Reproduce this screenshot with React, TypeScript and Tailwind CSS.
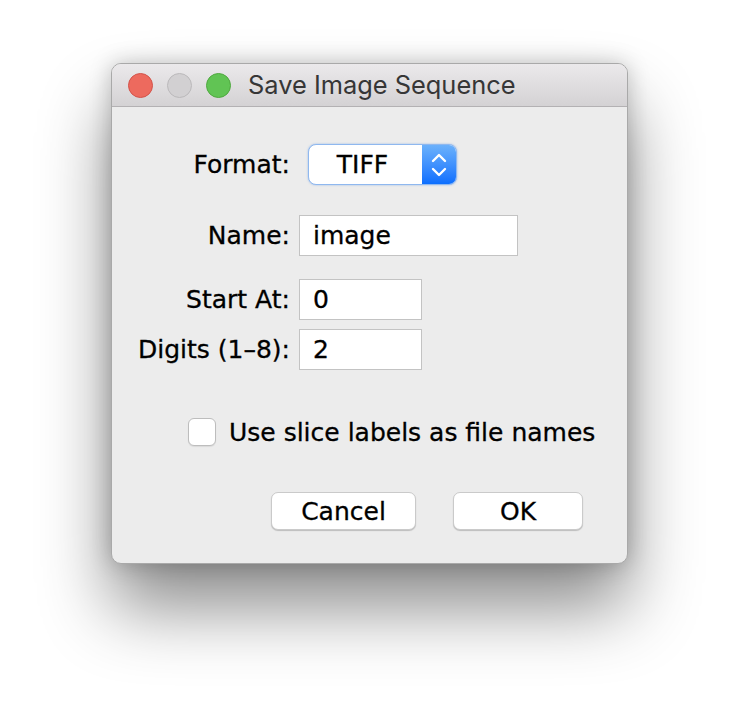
import React from "react";

const label = "text-right text-[25px] leading-none text-black [-webkit-text-stroke:0.3px_black]";
const field =
  "h-[41px] bg-white border border-[#c3c3c3] pl-[13px] flex items-center text-[25px] text-black [-webkit-text-stroke:0.3px_black]";

function Row({ name, children, className }: { name: string; children: React.ReactNode; className?: string }) {
  return (
    <div className={"flex items-center " + (className ?? "")}>
      <div className={"w-[178px] " + label}>{name}</div>
      <div className="ml-[9px]">{children}</div>
    </div>
  );
}

export default function App() {
  return (
    <div
      className="w-[740px] h-[724px] bg-white pt-[63px] pl-[111px]"
      style={{ fontFamily: '"DejaVu Sans", sans-serif' }}
    >
      <div className="w-[517px] h-[501px] rounded-[10px] border border-[#a9a9a9] bg-[#ececec] overflow-hidden shadow-[0_44px_70px_rgba(0,0,0,0.45),0_0_22px_rgba(0,0,0,0.22)]">
        {/* title bar */}
        <div className="h-[43px] flex items-center bg-gradient-to-b from-[#ebe9eb] to-[#d4d2d4] border-b border-[#b3b1b3]">
          <div className="flex items-center gap-[14px] pl-[16px]">
            <span className="w-[25px] h-[25px] rounded-full bg-[#ed6a5e] border border-[#d2534a]" />
            <span className="w-[25px] h-[25px] rounded-full bg-[#d2d0d2] border border-[#bab8ba]" />
            <span className="w-[25px] h-[25px] rounded-full bg-[#61c454] border border-[#4fa83f]" />
          </div>
          <div
            className="ml-[17px] text-[25.4px] text-[#363636] leading-none"
            style={{ fontFamily: "Inter, sans-serif" }}
          >
            Save Image Sequence
          </div>
        </div>

        {/* body */}
        <div className="pt-[37px]">
          <Row name="Format:">
            <div className="ml-[9px] w-[149px] h-[41px] flex rounded-[8px] border border-[#8fb8ef] bg-white overflow-hidden shadow-[0_0_2px_rgba(60,130,230,0.5)]">
              <div className="flex-1 flex items-center justify-center pr-[6px] text-[25px] text-black [-webkit-text-stroke:0.3px_black]">TIFF</div>
              <div className="w-[34px] bg-gradient-to-b from-[#6bb1fb] to-[#0a6efe] flex items-center justify-center">
                <svg width="16" height="28" viewBox="0 0 16 28" fill="none" stroke="white" strokeWidth="2.4" strokeLinecap="round" strokeLinejoin="round">
                  <path d="M2 10 L8 4 L14 10" />
                  <path d="M2 18 L8 24 L14 18" />
                </svg>
              </div>
            </div>
          </Row>

          <Row name="Name:" className="mt-[30px]">
            <div className={field + " w-[219px]"}>image</div>
          </Row>

          <Row name="Start At:" className="mt-[23px]">
            <div className={field + " w-[123px]"}>0</div>
          </Row>

          <Row name="Digits (1–8):" className="mt-[9px]">
            <div className={field + " w-[123px]"}>2</div>
          </Row>

          <div className="mt-[48px] pl-[76px] flex items-center">
            <span className="w-[28px] h-[28px] rounded-[6px] bg-white border border-[#bdbdbd] shadow-[0_1px_1px_rgba(0,0,0,0.08)]" />
            <span className="ml-[13px] text-[25px] text-black leading-none [-webkit-text-stroke:0.3px_black]">Use slice labels as file names</span>
          </div>

          <div className="mt-[46px] pl-[159px] flex gap-[37px]">
            <button className="w-[145px] h-[38px] rounded-[7px] bg-white border border-[#cacaca] shadow-[0_1px_1px_rgba(0,0,0,0.2)] text-[25px] text-black leading-none [-webkit-text-stroke:0.3px_black]">
              Cancel
            </button>
            <button className="w-[130px] h-[38px] rounded-[7px] bg-white border border-[#cacaca] shadow-[0_1px_1px_rgba(0,0,0,0.2)] text-[25px] text-black leading-none [-webkit-text-stroke:0.3px_black]">
              OK
            </button>
          </div>
        </div>
      </div>
    </div>
  );
}
